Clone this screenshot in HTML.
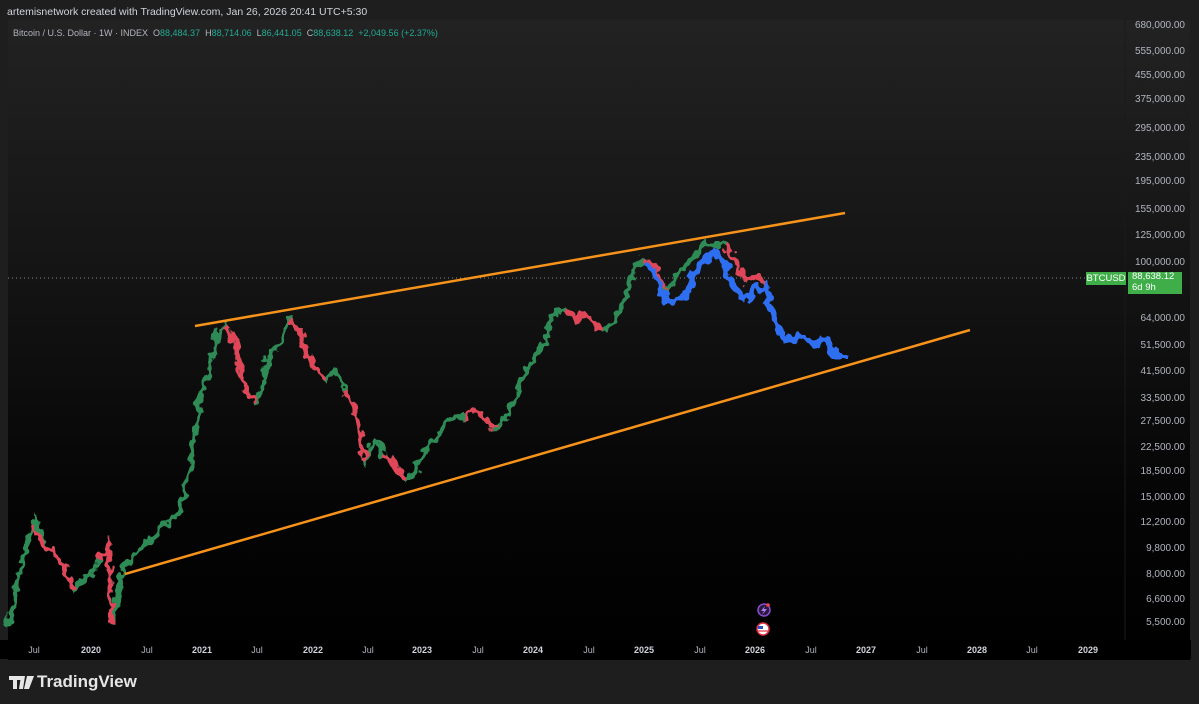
<!DOCTYPE html>
<html><head><meta charset="utf-8"><style>
body{margin:0;width:1199px;height:704px;background:#1e1e1e;font-family:"Liberation Sans",sans-serif;overflow:hidden;position:relative}
.t{position:absolute;white-space:nowrap}
#panel{position:absolute;left:8px;top:20px;width:1182px;height:640px;background:linear-gradient(#222 0%,#141414 40%,#050505 75%,#000 100%)}
.p{position:absolute;right:14px;font-size:10px;color:#b2b5be}
.x{position:absolute;top:645px;font-size:9px;color:#b2b5be;transform:translateX(-50%)}
.x.b{font-weight:bold;color:#d1d4dc}
</style></head><body>
<div class="t" style="left:7px;top:6px;font-size:10.5px;color:#d1d4dc">artemisnetwork created with TradingView.com, Jan 26, 2026 20:41 UTC+5:30</div>
<div id="panel">
<div class="t" style="left:5px;top:8px;font-size:9px;color:#b2b5be">Bitcoin / U.S. Dollar · 1W · INDEX &nbsp;O<span style="color:#22ab94">88,484.37</span> &nbsp;H<span style="color:#22ab94">88,714.06</span> &nbsp;L<span style="color:#22ab94">86,441.05</span> &nbsp;C<span style="color:#22ab94">88,638.12</span> &nbsp;<span style="color:#22ab94">+2,049.56 (+2.37%)</span></div>
</div>
<svg style="position:absolute;left:0;top:0" width="1199" height="704">
<defs>
<filter id="j" x="-5%" y="-10%" width="110%" height="120%">
<feTurbulence type="fractalNoise" baseFrequency="0.12 0.1" numOctaves="2" seed="3" result="n"/>
<feDisplacementMap in="SourceGraphic" in2="n" scale="14" xChannelSelector="R" yChannelSelector="G"/>
</filter>
</defs>
<line x1="1125" y1="20" x2="1125" y2="640" stroke="#1a1a1a"/>
<line x1="8" y1="278" x2="1090" y2="278" stroke="#888" stroke-width="1" stroke-dasharray="1,3"/>
<g filter="url(#j)">
<polyline fill="none" stroke="#2e8b57" stroke-width="5" points="8,625 15,600 22,560 35,520 45,545 60,560 75,590 85,580 100,560 108,545 112,625 118,590 125,565 140,550 160,530 180,510 190,470 200,400 210,370 218,330 225,325 235,340 245,390 255,400 262,390 270,350 280,345 290,320 300,330 305,350 315,365 325,380 335,370 345,390 355,410 365,460 375,440 385,455 395,465 405,480 415,470 425,450 435,440 445,425 455,415 465,420 475,410 485,420 495,430 505,420 515,400 525,370 535,360 545,340 555,310 565,310 575,320 585,315 595,325 605,330 615,320 625,300 635,265 645,260 655,265 665,290 675,280 685,265 695,255 705,245 715,245 725,245 735,260 745,280 755,275 765,285"/>
<g fill="none" stroke="#e04458" stroke-width="5">
<polyline points="30,525 45,545 60,560 75,590"/><polyline points="100,560 108,545 112,625"/>
<polyline points="225,325 235,340 245,390 255,400"/><polyline points="290,320 300,330 305,350 315,365 325,380"/>
<polyline points="345,390 355,410 365,460"/><polyline points="385,455 395,465 405,480"/>
<polyline points="465,420 475,410 485,420 495,430"/><polyline points="565,310 575,320 585,315 595,325 605,330"/>
<polyline points="645,260 655,265 665,290"/><polyline points="725,245 735,260 745,280 755,275 765,285"/>
</g>
<polyline fill="none" stroke="#2f6ef0" stroke-width="7" points="645,262 655,272 665,300 675,302 685,296 695,272 705,262 715,252 725,266 735,290 745,300 755,290 765,285 775,320 785,340 800,335 815,345 825,340 835,355 845,355"/>
</g>
<line x1="195" y1="326" x2="845" y2="213" stroke="#f7931a" stroke-width="2.5"/>
<line x1="125" y1="574" x2="970" y2="330" stroke="#f7931a" stroke-width="2.5"/>
<rect x="0" y="640" width="1191" height="19" fill="#000"/>
<circle cx="764" cy="610" r="6" fill="#2a1a40" stroke="#8a4fd0" stroke-width="1.5"/>
<path d="M765 606 L761 611 L764 611 L762 615 L767 609 L764 609 Z" fill="#b07af0"/>
<circle cx="768" cy="605" r="1.8" fill="#f04050"/>
<circle cx="763" cy="629" r="6" fill="#fff" stroke="#e03040" stroke-width="1.5"/>
<rect x="758" y="626" width="5" height="3" fill="#3050c0"/>
<line x1="758" y1="631" x2="768" y2="631" stroke="#e03040" stroke-width="1.2"/>
<path d="M9 676h12v4h-4v9h-4v-9h-4z M21 676 h4 l-2 13 h-4z M27 676h7l-5 13h-5z" fill="#e6e6e6"/>
</svg>
<div class="t" style="left:37px;top:672px;font-size:17px;font-weight:bold;color:#e6e6e6">TradingView</div>
<div class="p" style="top:20px">680,000.00</div><div class="p" style="top:46px">555,000.00</div><div class="p" style="top:70px">455,000.00</div><div class="p" style="top:94px">375,000.00</div><div class="p" style="top:123px">295,000.00</div><div class="p" style="top:152px">235,000.00</div><div class="p" style="top:176px">195,000.00</div><div class="p" style="top:204px">155,000.00</div><div class="p" style="top:230px">125,000.00</div><div class="p" style="top:257px">100,000.00</div><div class="p" style="top:313px">64,000.00</div><div class="p" style="top:340px">51,500.00</div><div class="p" style="top:366px">41,500.00</div><div class="p" style="top:393px">33,500.00</div><div class="p" style="top:416px">27,500.00</div><div class="p" style="top:442px">22,500.00</div><div class="p" style="top:466px">18,500.00</div><div class="p" style="top:492px">15,000.00</div><div class="p" style="top:517px">12,200.00</div><div class="p" style="top:543px">9,800.00</div><div class="p" style="top:569px">8,000.00</div><div class="p" style="top:594px">6,600.00</div><div class="p" style="top:617px">5,500.00</div>
<div class="t" style="left:1086px;top:272px;width:40px;height:13px;background:#3fae49;color:#fff;font-size:9.5px;text-align:center;line-height:13px">BTCUSD</div>
<div class="t" style="left:1128px;top:272px;width:54px;height:22px;background:#3fae49;color:#fff;font-size:9.5px;line-height:10.5px;padding-left:4px;box-sizing:border-box">88,638.12<br>6d 9h</div>
<div class="x" style="left:34px">Jul</div><div class="x b" style="left:91px">2020</div><div class="x" style="left:147px">Jul</div><div class="x b" style="left:202px">2021</div><div class="x" style="left:257px">Jul</div><div class="x b" style="left:313px">2022</div><div class="x" style="left:368px">Jul</div><div class="x b" style="left:422px">2023</div><div class="x" style="left:478px">Jul</div><div class="x b" style="left:533px">2024</div><div class="x" style="left:589px">Jul</div><div class="x b" style="left:644px">2025</div><div class="x" style="left:700px">Jul</div><div class="x b" style="left:755px">2026</div><div class="x" style="left:811px">Jul</div><div class="x b" style="left:866px">2027</div><div class="x" style="left:922px">Jul</div><div class="x b" style="left:977px">2028</div><div class="x" style="left:1032px">Jul</div><div class="x b" style="left:1088px">2029</div>
</body></html>
